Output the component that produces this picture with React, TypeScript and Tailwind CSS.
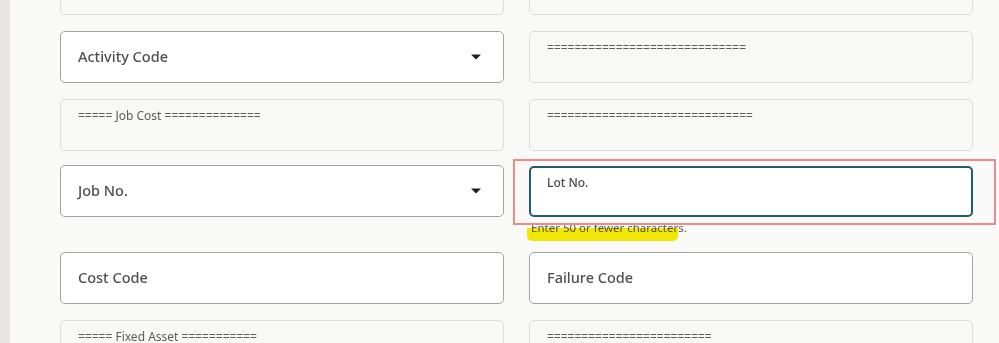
import React from 'react';

const font = { fontFamily: '"Noto Sans", "Open Sans", Arial, sans-serif' };

function Caret() {
    return (
        <svg width="10" height="6" viewBox="0 0 10 6" className="shrink-0">
            <path d="M0 0.5 L10 0.5 L5 5.5 Z" fill="#1f1f1f" />
        </svg>
    );
}

function SelectField({ label, caret }: { label: string; caret?: boolean }) {
    return (
        <div className="h-[52px] rounded-[5px] border border-[#a3a3a3] bg-white flex items-center justify-between pl-[17px] pr-[22px]">
            <span className="text-[14.5px] font-medium text-[#4f4f4f]">{label}</span>
            {caret && <Caret />}
        </div>
    );
}

function ReadOnlyField({ text }: { text: string }) {
    return (
        <div className="h-[52px] rounded-[5px] border border-[#dcdcdb] bg-[#f8f8f7] pl-[17px] pt-[9px]">
            <span className="block text-[12px] leading-[14px] text-[#5b5b5b] whitespace-pre">{text}</span>
        </div>
    );
}

export default function App() {
    return (
        <div className="h-[343px] w-[999px] overflow-hidden flex bg-[#f9f9f8]" style={font}>
            {/* textured edge on the left */}
            <div className="w-[10px] shrink-0 bg-[#e8e6e2]" />

            <div className="flex-1 pl-[50px] -mt-[37px]">
                <div className="grid grid-cols-[444px_444px] gap-x-[25px] gap-y-[16px]">
                    {/* Row 0 (cut off at top) */}
                    <ReadOnlyField text="" />
                    <ReadOnlyField text="" />

                    {/* Row 1 */}
                    <SelectField label="Activity Code" caret />
                    <ReadOnlyField text="=============================" />

                    {/* Row 2 */}
                    <ReadOnlyField text="===== Job Cost ==============" />
                    <ReadOnlyField text="==============================" />

                    {/* Row 3 */}
                    <div className="-mt-[2px]">
                        <SelectField label="Job No." caret />
                    </div>
                    <div className="relative -mt-[1px] h-[70px]">
                        <div className="h-[51px] rounded-[5px] border-2 border-[#1d5c73] bg-white pl-[16px] pt-[8px]">
                            <span className="block text-[12px] leading-[14px] font-medium text-[#4a4a4a]">Lot No.</span>
                        </div>
                        <div className="relative h-[18px] pl-[2px] pt-[4px]">
                            <div className="absolute left-[-2px] top-[11px] w-[151px] h-[13px] bg-[#f8ec06] mix-blend-multiply rounded-b-[5px]" />
                            <span className="relative block text-[11.5px] leading-[14px] text-[#5a5a5a] mix-blend-multiply">Enter 50 or fewer characters.</span>
                        </div>
                        {/* annotation box */}
                        <div className="absolute left-[-16px] top-[-7px] w-[483px] h-[66px] border-2 border-[#ef8a8a] pointer-events-none" />
                    </div>

                    {/* Row 4 */}
                    <SelectField label="Cost Code" />
                    <SelectField label="Failure Code" />

                    {/* Row 5 */}
                    <ReadOnlyField text="===== Fixed Asset ===========" />
                    <ReadOnlyField text="========================" />
                </div>
            </div>
        </div>
    );
}
